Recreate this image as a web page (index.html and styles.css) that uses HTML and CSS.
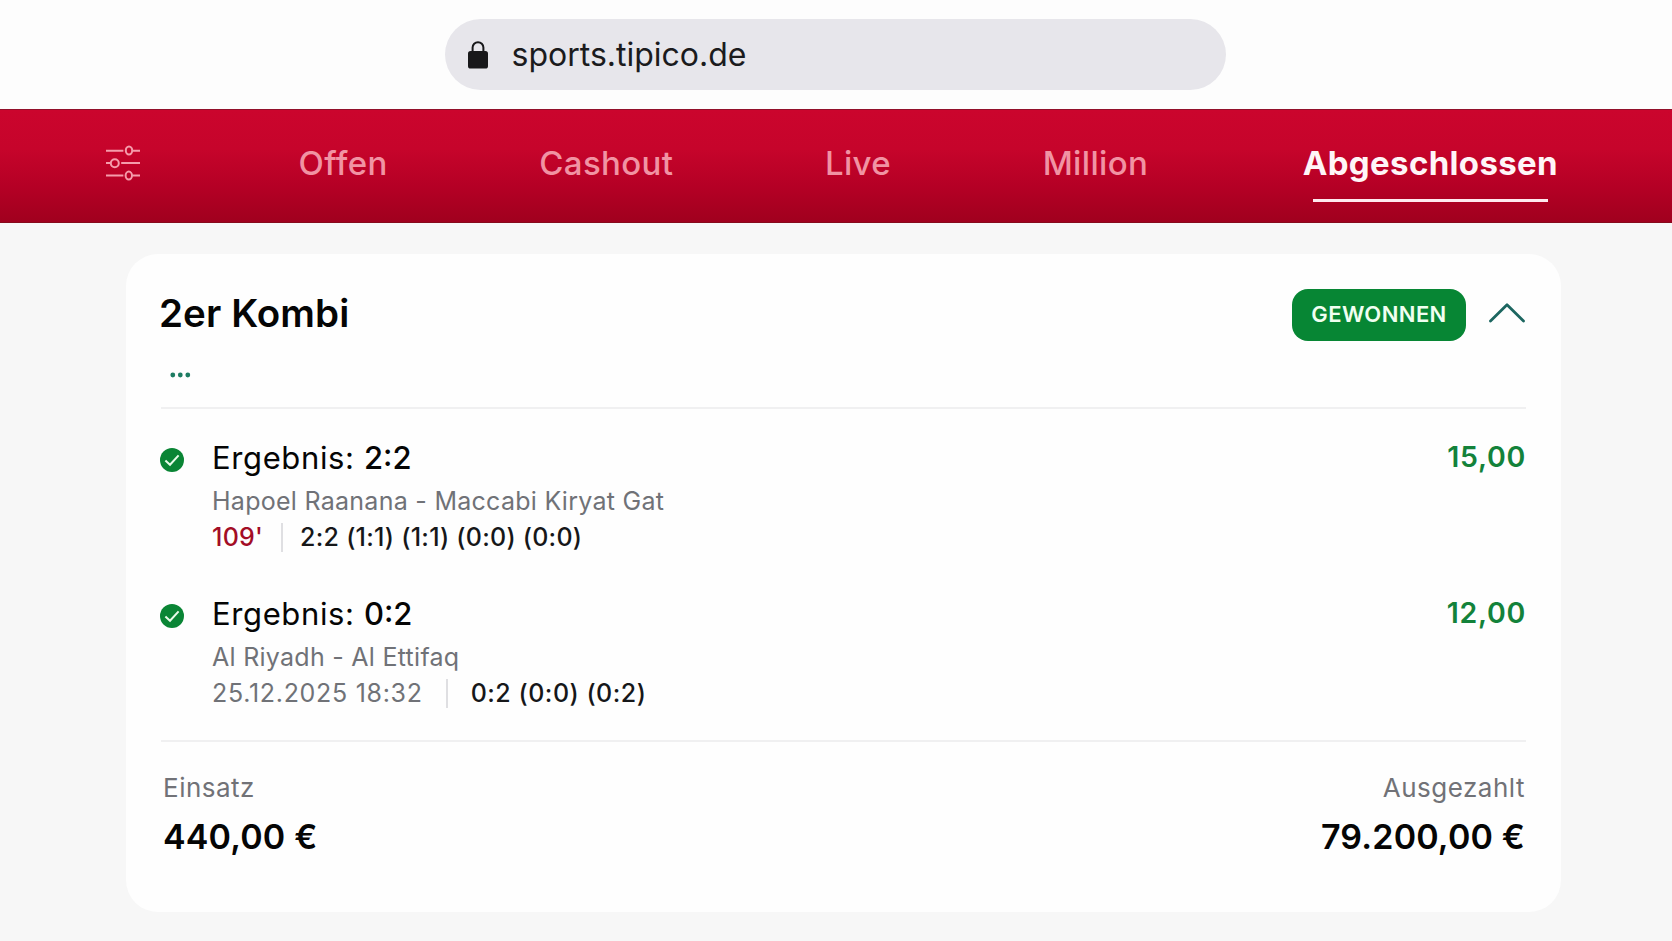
FILE: index.html
```html
<!DOCTYPE html>
<html lang="de">
  <head>
    <meta charset="utf-8" />
    <title>Wettschein</title>
    <meta name="viewport" content="width=device-width, initial-scale=1.0" />
    <link rel="stylesheet" href="styles.css">
  </head>
  <body>
    <header class="browser-bar">
      <div class="address">
        <svg class="lock" width="20" height="28" viewBox="0 0 20 28">
          <path d="M4.6 11V6.6a5.4 5.4 0 0 1 10.8 0V11" fill="none" stroke="#18181a" stroke-width="2" />
          <rect x="0" y="10" width="20" height="17.5" rx="2.6" fill="#18181a" />
        </svg>
        <span class="url">sports.tipico.de</span>
      </div>
    </header>

    <nav class="tabs">
      <svg class="filter" width="34" height="36" viewBox="0 0 34 36" fill="none" stroke="#f59cab" stroke-width="2">
        <path d="M0 5.7h17.4M26.4 5.7H34M0 18h4.7M15.2 18H34M0 30.5h17.4M26.4 30.5H34" />
        <ellipse cx="23" cy="5.5" rx="3.2" ry="4" />
        <ellipse cx="8.8" cy="18.2" rx="4" ry="4" />
        <ellipse cx="22.8" cy="30.6" rx="3.2" ry="4" />
      </svg>
      <a class="tab">Offen</a>
      <a class="tab">Cashout</a>
      <a class="tab">Live</a>
      <a class="tab">Million</a>
      <a class="tab active">Abgeschlossen</a>
    </nav>

    <main class="ticket">
      <div class="ticket-header">
        <h1>2er Kombi</h1>
        <span class="badge">GEWONNEN</span>
        <svg class="chevron" width="36" height="20" viewBox="0 0 36 20">
          <path d="M1.5 18 18 1.8 34.5 18" fill="none" stroke="#1c6660" stroke-width="2.8" stroke-linecap="round" stroke-linejoin="round" />
        </svg>
      </div>
      <div class="more">
        <svg width="22" height="6" viewBox="0 0 22 6" fill="#1d7c62">
          <circle cx="2.8" cy="3" r="2.4" />
          <circle cx="10.3" cy="3" r="2.4" />
          <circle cx="17.8" cy="3" r="2.4" />
        </svg>
      </div>

      <div class="bets">
        <section class="bet">
          <svg class="check" width="24" height="24" viewBox="0 0 24 24">
            <circle cx="12" cy="12" r="12" fill="#0a8535" />
            <path d="M5.4 12.6 10 16.8 18.6 7.4" fill="none" stroke="#e8fbe9" stroke-width="2" />
          </svg>
          <div class="bet-info">
            <h2>Ergebnis: <b>2:2</b></h2>
            <p class="teams">Hapoel Raanana - Maccabi Kiryat Gat</p>
            <p class="result">
              <span class="minute">109'</span>
              <span class="score">2:2 (1:1) (1:1) (0:0) (0:0)</span>
            </p>
          </div>
          <span class="odds">15,00</span>
        </section>

        <section class="bet">
          <svg class="check" width="24" height="24" viewBox="0 0 24 24">
            <circle cx="12" cy="12" r="12" fill="#0a8535" />
            <path d="M5.4 12.6 10 16.8 18.6 7.4" fill="none" stroke="#e8fbe9" stroke-width="2" />
          </svg>
          <div class="bet-info">
            <h2>Ergebnis: <b>0:2</b></h2>
            <p class="teams">Al Riyadh - Al Ettifaq</p>
            <p class="result">
              <span class="date">25.12.2025 18:32</span>
              <span class="score wide">0:2 (0:0) (0:2)</span>
            </p>
          </div>
          <span class="odds">12,00</span>
        </section>
      </div>

      <footer class="totals">
        <div class="total">
          <span class="label">Einsatz</span>
          <span class="amount">440,00 €</span>
        </div>
        <div class="total payout">
          <span class="label">Ausgezahlt</span>
          <span class="amount">79.200,00 €</span>
        </div>
      </footer>
    </main>
  </body>
</html>
```
FILE: styles.css
```css
* {
  box-sizing: border-box;
}

body {
  margin: 0;
  height: 941px;
  overflow: hidden;
  background-color: #f7f7f7;
  font-family: Inter, "Liberation Sans", sans-serif;
  color: #050505;
}

h1,
h2,
p {
  margin: 0;
}

/* Address bar */
.browser-bar {
  height: 109px;
  padding-top: 19px;
  background-color: #fdfdfd;
}

.address {
  display: flex;
  align-items: center;
  width: 781px;
  height: 71px;
  margin-left: 445px;
  padding-left: 23px;
  border-radius: 36px;
  background-color: #e7e6eb;
}

.url {
  margin: 1px 0 0 23.5px;
  font-size: 32px;
  line-height: 40px;
  color: #1b1b1d;
}

/* Tabs */
.tabs {
  display: flex;
  align-items: center;
  gap: 151.6px;
  height: 114px;
  padding: 0 114px 7px 106px;
  border-top: 1px solid #92102a;
  border-bottom: 1px solid #860a1c;
  background: linear-gradient(#cb052d 0%, #c6042b 35%, #b50025 68%, #a0001e 100%);
}

.filter {
  margin-right: 7px;
}

.tab {
  position: relative;
  font-size: 33px;
  font-weight: 500;
  line-height: 40px;
  letter-spacing: 0.35px;
  color: #f193a3;
}

.tab.active {
  margin-left: auto;
  font-weight: 700;
  color: #fff5f7;
}

.tab.active::after {
  content: "";
  position: absolute;
  left: 10px;
  right: 10px;
  bottom: -19px;
  height: 3px;
  background-color: #ffe9ee;
}

/* Ticket */
.ticket {
  width: 1435px;
  height: 658px;
  margin: 31px 0 0 126px;
  padding: 35px 35px 0;
  border-radius: 32px;
  background-color: #fefefe;
}

.ticket-header {
  display: flex;
  align-items: center;
  height: 52px;
}

.ticket-header h1 {
  flex: 1;
  margin: 0 0 4px -2px;
  font-size: 38.5px;
  font-weight: 600;
  line-height: 50px;
  letter-spacing: 0.1px;
}

.badge {
  width: 174px;
  height: 52px;
  border-radius: 16px;
  background-color: #078634;
  color: #f0fff1;
  font-size: 22px;
  font-weight: 600;
  line-height: 51px;
  letter-spacing: 0.4px;
  text-align: center;
}

.chevron {
  margin: 0 1px 4px 23px;
}

.more {
  display: flex;
  height: 66px;
  padding: 31px 0 0 9px;
}

.bets {
  display: flex;
  flex-direction: column;
  gap: 28px;
  height: 335px;
  padding-top: 29px;
  border-top: 2px solid #f0f0f1;
  border-bottom: 2px solid #f0f0f1;
}

.bet {
  display: flex;
  height: 128px;
}

.check {
  margin: 10px 28px 0 -1px;
}

.bet-info {
  flex: 1;
}

.bet h2 {
  font-size: 31px;
  font-weight: 400;
  line-height: 40px;
  letter-spacing: 0.62px;
}

.bet h2 b {
  font-weight: 500;
  letter-spacing: 0;
}

.teams {
  margin-top: 5px;
  font-size: 25px;
  line-height: 36px;
  letter-spacing: 0.27px;
  color: #707277;
}

.result {
  display: flex;
  font-size: 25px;
  line-height: 36px;
  letter-spacing: 0.25px;
}

.minute {
  font-weight: 500;
  color: #a30d26;
}

.date {
  letter-spacing: 0.7px;
  color: #707277;
}

.score {
  display: flex;
  align-items: center;
  margin-left: 18px;
  font-weight: 500;
  color: #161719;
}

.score.wide {
  margin-left: 23px;
  letter-spacing: 0.5px;
}

.score::before {
  content: "";
  width: 2px;
  height: 29px;
  margin-right: 17px;
  background-color: #dfdfe2;
}

.score.wide::before {
  margin-right: 23px;
}

.odds {
  font-size: 28.5px;
  font-weight: 600;
  line-height: 38px;
  letter-spacing: 0.7px;
  color: #13823a;
}

/* Stake and payout */
.totals {
  display: flex;
  justify-content: space-between;
  padding: 29px 1px 0 2px;
}

.total {
  display: flex;
  flex-direction: column;
}

.total.payout {
  align-items: flex-end;
}

.label {
  font-size: 26px;
  line-height: 34px;
  letter-spacing: 0.5px;
  color: #717277;
}

.amount {
  margin-top: 9px;
  font-size: 34px;
  font-weight: 600;
  line-height: 46px;
  letter-spacing: 0.15px;
}
```
